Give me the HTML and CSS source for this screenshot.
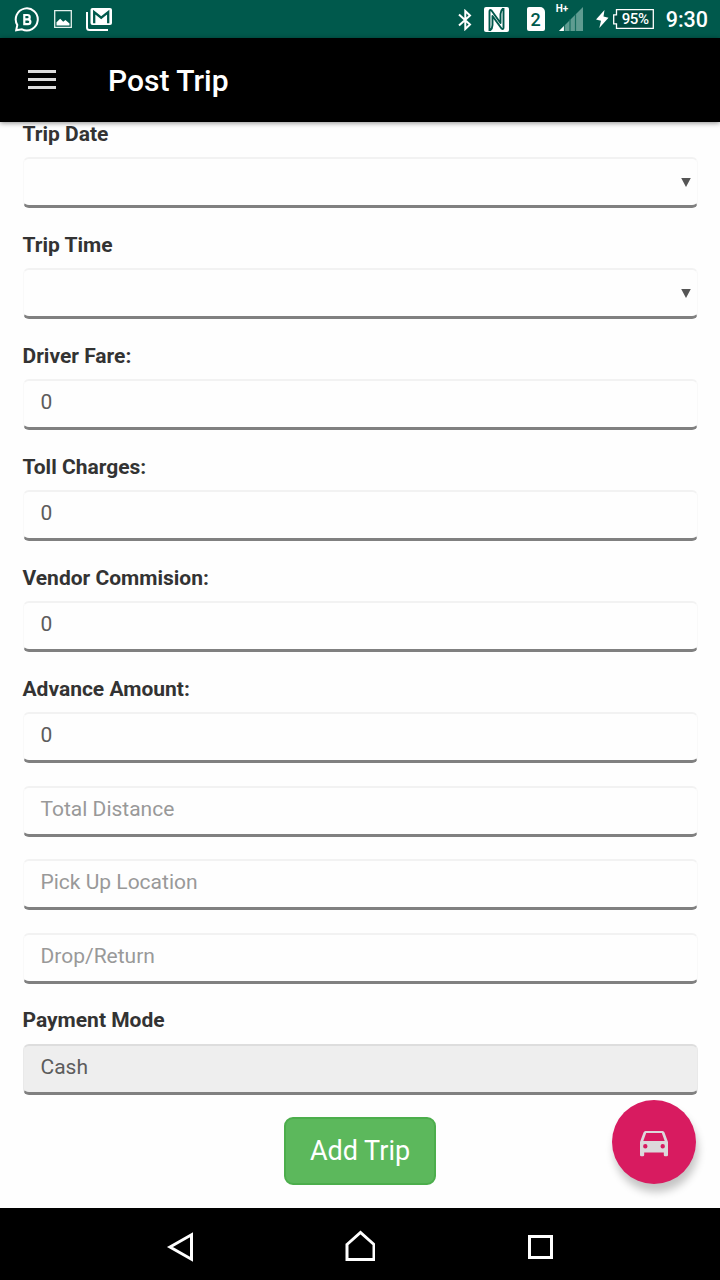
FILE: index.html
```html
<!DOCTYPE html>
<html lang="en">
<head>
<meta charset="utf-8">
<title>Post Trip</title>
<link rel="stylesheet" href="styles.css">
</head>
<body>
<div class="screen">
  <div class="status">
    <svg class="ic-wa" width="26" height="26" viewBox="0 0 26 26" fill="none" stroke="#fff" stroke-width="2"><path d="M2.200 23.300 3.300 18A11 11 0 1 1 8 22.300Z"/><path stroke-width="2.200" d="M10.300 8h3.200a2.200 2.200 0 0 1 0 4.400h-3.200zM10.300 12.400H14a2.400 2.400 0 0 1 0 4.800h-3.700z"/></svg>
    <svg class="ic-photo" width="18" height="18" viewBox="0 0 18 18"><path fill="none" stroke="#e2f0ec" stroke-width="1.300" d="M.7.7h16.600v16.600H.7z"/><path fill="#fff" d="M2.500 15.500v-3.300l3.700-3.500 3 3 2.200-1.700 4.100 3.500v2z"/></svg>
    <svg class="ic-mail" width="27" height="23" viewBox="0 0 27 23"><path fill="none" stroke="#fff" stroke-width="2" d="M1 4v15.500Q1 22 3.500 22H22"/><rect x="4.500" width="21.500" height="17" rx="2" fill="#fff"/><path fill="none" stroke="#00594c" stroke-width="2.300" d="M8.200 15.200V4.200l7 5.500 7-5.500v11"/></svg>
    <span class="spacer"></span>
    <svg class="ic-bt" width="14" height="22" viewBox="0 0 14 22" fill="none" stroke="#fff" stroke-width="2"><path d="M1 5.500 12 15.500 7.300 20V2L12 6.500 1 16.500"/></svg>
    <svg class="ic-nfc" width="25" height="25" viewBox="0 0 25 25"><path fill="#fff" d="M2 0h21q2 0 2 2v21q0 2-2 2H2q-2 0-2-2V2q0-2 2-2Z"/><path fill="none" stroke="#00594c" stroke-width="1.900" stroke-linejoin="round" d="M5.500 24V4.500Q5.500 2 7.500 3.500L16.500 16V7q0-3.500 2.500-5.500M19.500 1v19.500q0 2.500-2 1L8.500 9v9q0 3.500-2.500 5.500"/></svg>
    <span class="sim">2</span>
    <span class="signal"><span class="net">H+</span><svg width="24" height="24" viewBox="0 0 24 24"><path fill="#5f9c91" d="M0 24 24 0v24z"/><path fill="#fff" d="M0 24l5-5v5z"/><path stroke="#176d5f" stroke-width="1.200" d="M5.500 18v6M11 12v12M16.500 7v17"/></svg></span>
    <svg class="ic-bolt" width="13" height="18" viewBox="0 0 13 18"><path fill="#fff" d="M8.500 0 0 9.500l5 1.300L3.300 18 12.500 7.700 7.500 6.500z"/></svg>
    <span class="battery"><svg width="41" height="20" viewBox="0 0 41 20"><path fill="#004a40" stroke="#fff" stroke-width="1.300" d="M3.500.7h36.800v18.600H3.500v-4.500H.7v-9h2.800z"/></svg><span class="pct">95%</span></span>
    <span class="clock">9:30</span>
  </div>
  <header class="appbar">
    <div class="menu"><i class="bar"></i><i class="bar"></i><i class="bar"></i></div>
    <h1 class="title">Post Trip</h1>
  </header>
  <main class="content">
    <form class="form">
      <div class="group"><label class="label">Trip Date</label><div class="field select"><svg width="10" height="9" viewBox="0 0 10 9"><path fill="#555" d="M.2 0h9.600L5 9z"/></svg></div></div>
      <div class="group"><label class="label">Trip Time</label><div class="field select"><svg width="10" height="9" viewBox="0 0 10 9"><path fill="#555" d="M.2 0h9.600L5 9z"/></svg></div></div>
      <div class="group"><label class="label">Driver Fare:</label><div class="field">0</div></div>
      <div class="group"><label class="label">Toll Charges:</label><div class="field">0</div></div>
      <div class="group"><label class="label">Vendor Commision:</label><div class="field">0</div></div>
      <div class="group"><label class="label">Advance Amount:</label><div class="field">0</div></div>
      <div class="group"><div class="field hint">Total Distance</div></div>
      <div class="group"><div class="field hint">Pick Up Location</div></div>
      <div class="group"><div class="field hint">Drop/Return</div></div>
      <div class="group"><label class="label">Payment Mode</label><div class="field readonly">Cash</div></div>
      <button class="submit" type="button">Add Trip</button>
    </form>
    <div class="fab"><svg width="28" height="26" viewBox="0 0 28 26"><path fill="#dcd9db" fill-rule="evenodd" d="M5.500 0h17q1.500 0 2 1.500L28 11v13q0 1.300-1.300 1.300h-1.600q-1.300 0-1.300-1.300v-2.500H4.200V24q0 1.300-1.300 1.300H1.300Q0 25.300 0 24V11l3.500-9.500Q4 0 5.500 0Zm.7 2L3.300 10h21.400L21.800 2ZM5.300 13a2.200 2.200 0 1 0 0 4.400 2.200 2.200 0 0 0 0-4.400Zm17.400 0a2.200 2.200 0 1 0 0 4.400 2.200 2.200 0 0 0 0-4.400Z"/></svg></div>
  </main>
  <nav class="nav">
    <svg viewBox="0 0 30 72"><path d="M5 39 26.500 26.800v24.400z"/></svg>
    <svg viewBox="0 0 30 72"><path d="M2 36.500 15.500 24.500l13.500 12v15H2z"/></svg>
    <svg viewBox="0 0 30 72"><path d="M4.500 28.500h22v21h-22z"/></svg>
  </nav>
</div>
</body>
</html>
```
FILE: styles.css
```css
* { box-sizing: border-box; }
body { margin: 0; font-family: Roboto, "Noto Sans", sans-serif; background: #fefefe; }
svg { display: block; flex: none; }
.screen { width: 720px; height: 1280px; display: flex; flex-direction: column; overflow: hidden; }

.status { height: 38px; flex: none; display: flex; align-items: flex-start; background: #00594c; color: #fff; padding: 7px 12px 0 14px; }
.ic-photo { margin: 3px 0 0 14px; }
.ic-mail { margin: 1px 0 0 14px; }
.spacer { flex: 1; }
.ic-bt { margin: 2px 12px 0 0; }
.ic-nfc { margin-right: 18px; }
.sim { width: 18px; height: 24px; background: #fff; color: #00594c; border-radius: 2px 5px 2px 2px; font-size: 18px; font-weight: 500; line-height: 26px; text-align: center; }
.signal { position: relative; margin: 0 13px 0 14px; }
.net { position: absolute; left: -3px; top: -5px; font-size: 10px; line-height: 14px; font-weight: 700; }
.ic-bolt { margin: 3px 4px 0 0; }
.battery { position: relative; margin: 2px 12px 0 0; }
.pct { position: absolute; left: 4px; right: 0; top: 0; text-align: center; font-size: 15px; line-height: 21px; font-weight: 500; letter-spacing: -.4px; }
.clock { font-size: 21.5px; line-height: 26px; font-weight: 500; }

.appbar { height: 84px; flex: none; display: flex; align-items: center; background: #000; color: #fff; padding-left: 28px; z-index: 2; box-shadow: 0 1px 5px rgba(0,0,0,.45); }
.menu { width: 28px; display: grid; gap: 5px; margin-bottom: 1px; }
.bar { height: 3px; background: #ddd; }
.title { margin: 2px 0 0 52px; font-size: 30px; line-height: 36px; font-weight: 500; }

.content { flex: 1; min-height: 0; position: relative; }
.form { margin-top: -2.5px; padding: 0 22.5px; display: flex; flex-direction: column; align-items: stretch; }
.group { margin-bottom: 22.5px; }
.label { display: block; height: 30px; margin-bottom: 7.5px; font-size: 21px; line-height: 29px; font-weight: 700; color: #333; }
.field { height: 51px; padding: 0 17px 4px; display: flex; align-items: center; border: 1px solid #f9f9f9; border-top: 2px solid #f2f2f2; border-bottom: 3px solid #808080; border-radius: 6px; font-size: 21px; color: #5c5c5c; background: #fefefe; }
.select { justify-content: flex-end; padding: 0 6px 0 0; }
.hint { color: #999; }
.readonly { background: #eee; border-top-color: #ddd; border-left-color: #e9e9e9; border-right-color: #e9e9e9; }
.submit { align-self: center; width: 152px; height: 68px; padding: 0; border: 2px solid #4cae4c; border-radius: 9px; background: #5cb85c; color: #fff; font: 400 27px/1 Roboto, sans-serif; }
.fab { position: absolute; right: 24px; bottom: 24px; width: 84px; height: 84px; padding-top: 3px; border-radius: 50%; background: #d81b60; display: flex; align-items: center; justify-content: center; box-shadow: 2px 8px 9px rgba(0,0,0,.23); }

.nav { height: 72px; padding: 0 90px; flex: none; background: #000; display: flex; justify-content: space-around; }
.nav svg { width: 30px; height: 72px; fill: none; stroke: #fff; stroke-width: 3; }
```
